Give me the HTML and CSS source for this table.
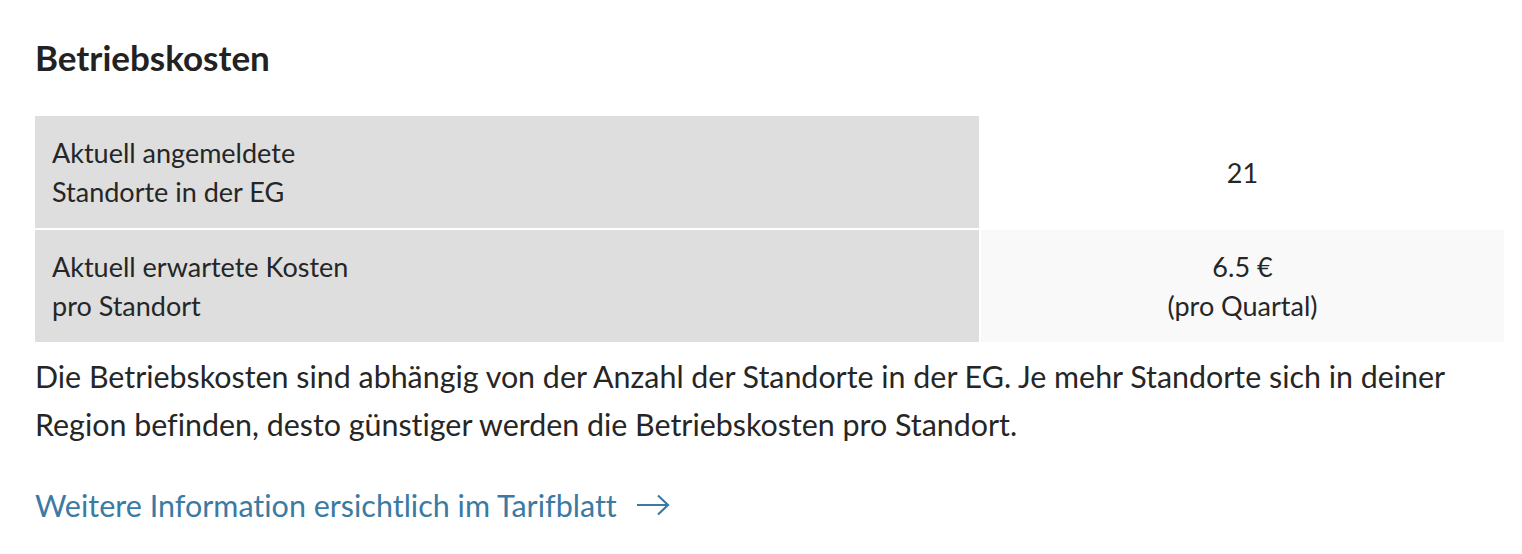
FILE: index.html
```html
<!DOCTYPE html>
<html lang="de">
<head>
<meta charset="utf-8">
<title>Betriebskosten</title>
<link rel="stylesheet" href="styles.css">
</head>
<body>
<section class="costs">
  <h2 class="costs__title">Betriebskosten</h2>
  <div class="costs__table">
    <div class="costs__row">
      <div class="costs__label">Aktuell angemeldete<br>Standorte in der EG</div>
      <div class="costs__value">21</div>
    </div>
    <div class="costs__row costs__row--alt">
      <div class="costs__label">Aktuell erwartete Kosten<br>pro Standort</div>
      <div class="costs__value">6.5 €<br>(pro Quartal)</div>
    </div>
  </div>
  <p class="costs__text">Die Betriebskosten sind abhängig von der Anzahl der Standorte in der EG. Je mehr Standorte sich in deiner Region befinden, desto günstiger werden die Betriebskosten pro Standort.</p>
  <a class="costs__link" href="#">Weitere Information ersichtlich im Tarifblatt
    <svg class="costs__arrow" width="34" height="22" viewBox="0 0 34 22" aria-hidden="true"><path d="M1 11H32M22 1.5L32 11L22 20.5" fill="none" stroke="currentColor" stroke-width="2.2"/></svg>
  </a>
</section>
</body>
</html>
```
FILE: styles.css
```css
html, body {
  margin: 0;
  padding: 0;
  background: #ffffff;
}
body {
  font-family: Lato, "Open Sans", sans-serif;
  font-variant-ligatures: none;
  color: #262626;
}
.costs {
  padding: 35px 18px 0 35px;
  width: 1469px;
}
.costs__title {
  margin: 0 0 37px;
  font-size: 35px;
  line-height: 44px;
  font-weight: 700;
  color: #222;
}
.costs__table {
  display: flex;
  flex-direction: column;
  gap: 2px;
}
.costs__row {
  display: grid;
  grid-template-columns: 944px 1fr;
  column-gap: 2px;
  height: 112px;
}
.costs__label {
  background: #dedede;
  padding: 0 17px;
  display: flex;
  align-items: center;
  font-size: 27px;
  line-height: 39px;
}
.costs__value {
  background: #ffffff;
  display: flex;
  align-items: center;
  justify-content: center;
  text-align: center;
  font-size: 27px;
  line-height: 39px;
}
.costs__row--alt .costs__value {
  background: #f9f9f9;
}
.costs__text {
  margin: 10px 0 0;
  font-size: 30.4px;
  line-height: 48px;
  max-width: 1440px;
}
.costs__link {
  display: inline-flex;
  align-items: center;
  gap: 19px;
  margin-top: 37px;
  font-size: 30.5px;
  line-height: 40px;
  color: #3a7aa3;
  text-decoration: none;
}
.costs__arrow {
  display: block;
}
```
